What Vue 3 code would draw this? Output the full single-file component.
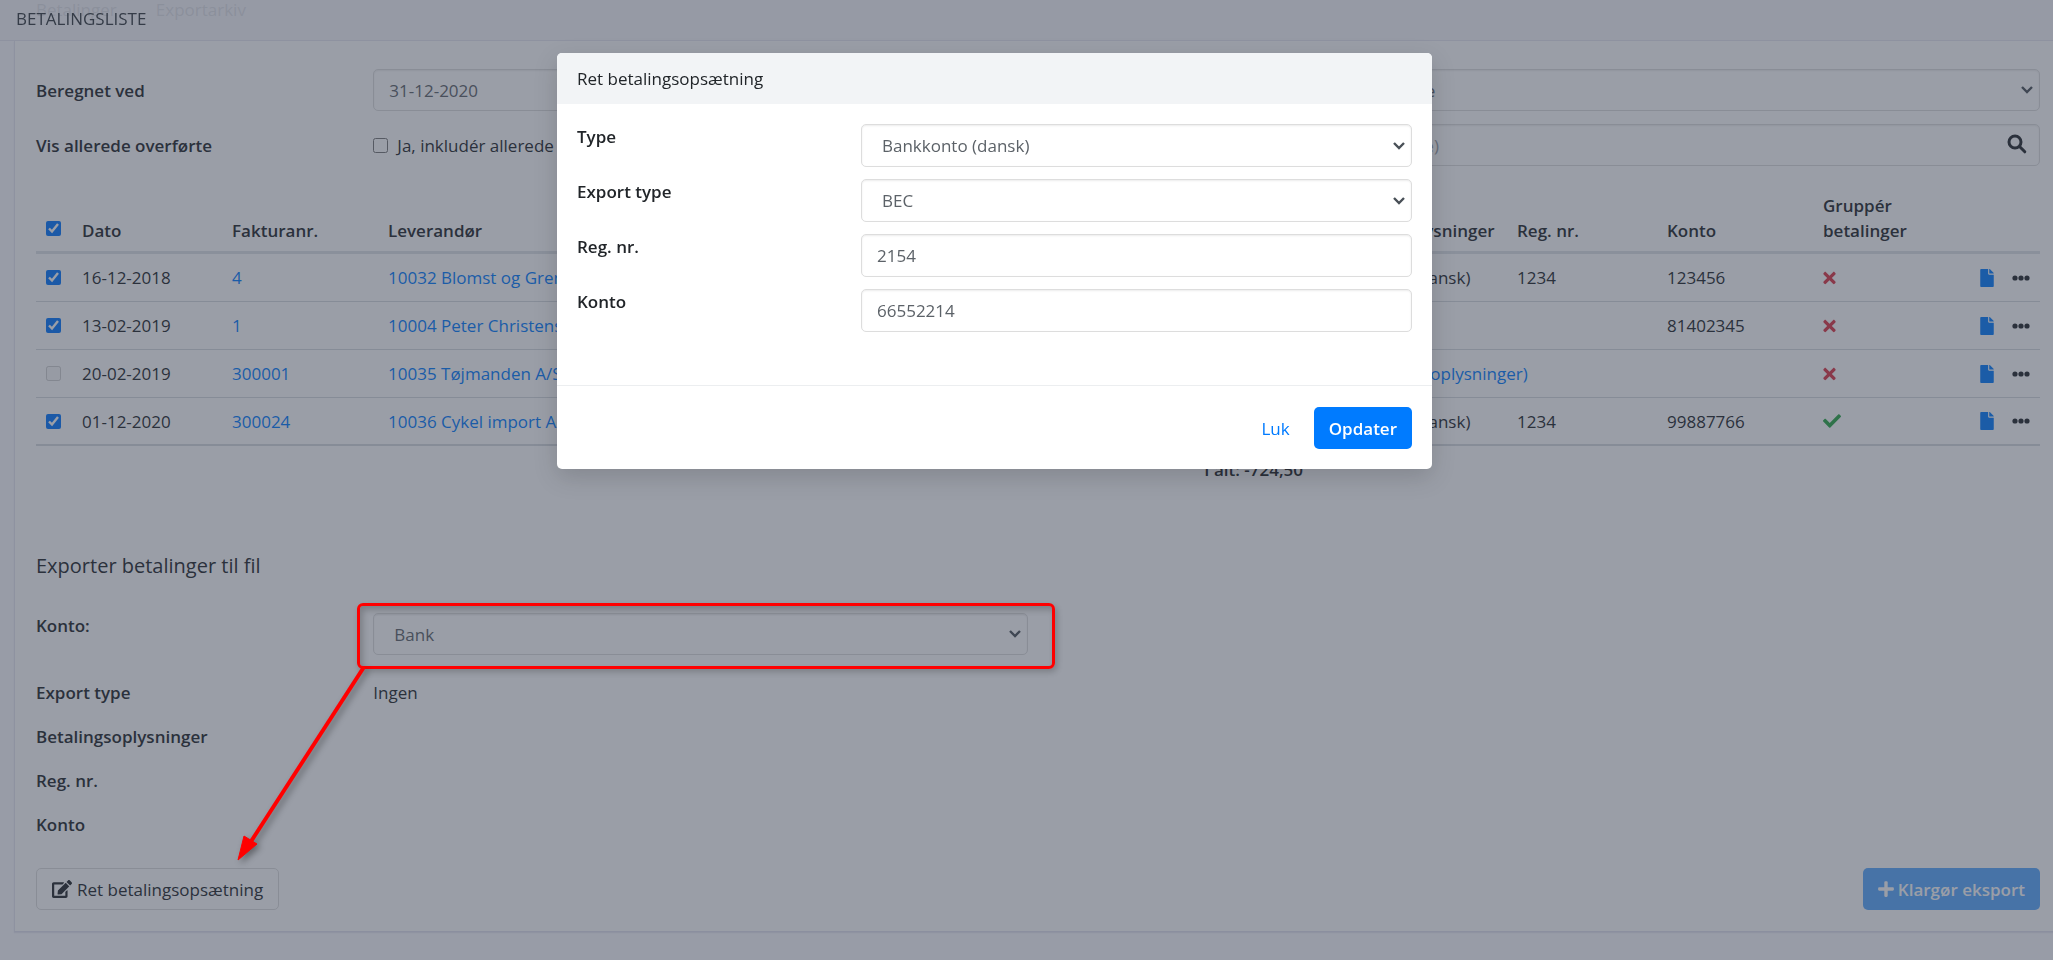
<script setup>
import { ref } from 'vue'

const rows = ref([
  { id: 1, picked: true, date: '16-12-2018', invoice: '4', supplier: '10032 Blomst og Gren', info: 'Bankkonto (dansk)', reg: '1234', account: '123456', grouped: false },
  { id: 2, picked: true, date: '13-02-2019', invoice: '1', supplier: '10004 Peter Christensen', info: '', reg: '', account: '81402345', grouped: false },
  { id: 3, picked: false, locked: true, date: '20-02-2019', invoice: '300001', supplier: '10035 Tøjmanden A/S', info: '(Ret betalingsoplysninger)', missing: true, reg: '', account: '', grouped: false },
  { id: 4, picked: true, date: '01-12-2020', invoice: '300024', supplier: '10036 Cykel import A/S', info: 'Bankkonto (dansk)', reg: '1234', account: '99887766', grouped: true },
])

const allPicked = ref(true)
const calculatedAt = ref('31-12-2020')
const regNo = ref('2154')
const accountNo = ref('66552214')
</script>

<template>
  <div class="page">
    <header class="topbar">BETALINGSLISTE</header>
    <nav class="tabs">
      <a href="#betalinger">Betalinger</a>
      <a href="#exportarkiv">Exportarkiv</a>
    </nav>

    <main class="card">
      <form class="grid filters">
        <label class="term" for="calc">Beregnet ved</label>
        <input id="calc" v-model="calculatedAt" class="control field" type="text" />
        <select class="control right" aria-label="Filter">
          <option>Alle</option>
        </select>

        <label class="term" for="include">Vis allerede overførte</label>
        <div class="check field">
          <input id="include" type="checkbox" />
          <label for="include">Ja, inkludér allerede overførte</label>
        </div>
        <div class="search right">
          <input class="control" type="text" placeholder="(alle)" aria-label="Søg" />
          <button type="button" class="bare glass" aria-label="Søg">
            <svg width="20" height="20" viewBox="0 0 20 20" fill="none" stroke="currentColor" stroke-linecap="round" stroke-width="3">
              <circle cx="8" cy="8" r="6" />
              <path d="M12.8 12.8l5 5" />
            </svg>
          </button>
        </div>
      </form>

      <table>
        <colgroup>
          <col class="c-pick" /><col class="c-date" /><col class="c-mid" /><col /><col class="c-sum" />
          <col class="c-info" /><col class="c-date" /><col class="c-mid" /><col class="c-mid" /><col class="c-tools" />
        </colgroup>
        <thead>
          <tr>
            <th><input v-model="allPicked" type="checkbox" aria-label="Vælg alle" /></th>
            <th>Dato</th>
            <th>Fakturanr.</th>
            <th>Leverandør</th>
            <th></th>
            <th>Betalingsoplysninger</th>
            <th>Reg. nr.</th>
            <th>Konto</th>
            <th>Gruppér<br />betalinger</th>
            <th></th>
          </tr>
        </thead>
        <tbody>
          <tr v-for="row in rows" :key="row.id">
            <td><input v-model="row.picked" type="checkbox" :disabled="row.locked" :aria-label="row.invoice" /></td>
            <td>{{ row.date }}</td>
            <td><a href="#faktura">{{ row.invoice }}</a></td>
            <td><a href="#leverandor">{{ row.supplier }}</a></td>
            <td></td>
            <td>
              <a v-if="row.missing" href="#oplysninger">{{ row.info }}</a>
              <template v-else>{{ row.info }}</template>
            </td>
            <td>{{ row.reg }}</td>
            <td>{{ row.account }}</td>
            <td>
              <svg v-if="row.grouped" class="icon yes" width="18" height="18" viewBox="0 0 512 512"><path d="M173.898 439.404l-166.4-166.4c-9.997-9.997-9.997-26.206 0-36.204l36.203-36.204c9.997-9.998 26.207-9.998 36.204 0L192 312.69 432.095 72.596c9.997-9.997 26.207-9.997 36.204 0l36.203 36.204c9.997 9.997 9.997 26.206 0 36.204l-294.4 294.401c-9.998 9.997-26.207 9.997-36.204-.001z" /></svg>
              <svg v-else class="icon no" width="13" height="18" viewBox="0 0 352 512"><path d="M242.72 256l100.07-100.07c12.28-12.28 12.28-32.19 0-44.48l-22.24-22.24c-12.28-12.28-32.19-12.28-44.48 0L176 189.28 75.93 89.21c-12.28-12.28-32.19-12.28-44.48 0L9.21 111.45c-12.28 12.28-12.28 32.19 0 44.48L109.28 256 9.21 356.07c-12.28 12.28-12.28 32.19 0 44.48l22.24 22.24c12.28 12.28 32.2 12.28 44.48 0L176 322.72l100.07 100.07c12.28 12.28 32.2 12.28 44.48 0l22.24-22.24c12.28-12.28 12.28-32.19 0-44.48L242.72 256z" /></svg>
            </td>
            <td>
              <div class="tools">
                <a href="#bilag" aria-label="Bilag"><svg class="icon" width="14" height="18" viewBox="0 0 384 512"><path d="M224 136V0H24C10.7 0 0 10.7 0 24v464c0 13.3 10.7 24 24 24h336c13.3 0 24-10.7 24-24V160H248c-13.2 0-24-10.8-24-24zm160-14.1v6.1H256V0h6.1c6.4 0 12.5 2.5 17 7l97.9 98c4.5 4.5 7 10.6 7 16.9z" /></svg></a>
                <button type="button" class="bare" aria-label="Mere"><svg class="icon" width="18" height="18" viewBox="0 0 18 18"><circle cx="3" cy="9" r="2.6" /><circle cx="9" cy="9" r="2.6" /><circle cx="15" cy="9" r="2.6" /></svg></button>
              </div>
            </td>
          </tr>
        </tbody>
        <tfoot>
          <tr>
            <td colspan="3"></td>
            <td colspan="2" class="total">I alt: -724,50</td>
            <td colspan="5"></td>
          </tr>
        </tfoot>
      </table>

      <h2>Exporter betalinger til fil</h2>
      <div class="grid">
        <label class="term" for="bank">Konto:</label>
        <div class="target field">
          <select id="bank" class="control">
            <option>Bank</option>
          </select>
          <div class="callout">
            <svg width="140" height="205" viewBox="0 0 140 205" aria-hidden="true">
              <path d="M134 1L20 177" stroke="#f00" stroke-width="4" />
              <path d="M8 194L14 170L27 178Z" fill="#f00" stroke="#f00" />
            </svg>
          </div>
        </div>
      </div>
      <dl class="grid facts">
        <dt class="term">Export type</dt>
        <dd class="field">Ingen</dd>
        <dt class="term">Betalingsoplysninger</dt>
        <dd class="field"></dd>
        <dt class="term">Reg. nr.</dt>
        <dd class="field"></dd>
        <dt class="term">Konto</dt>
        <dd class="field"></dd>
      </dl>

      <div class="actions">
        <button type="button" class="btn outline">
          <svg class="icon" width="20" height="18" viewBox="0 0 576 512"><path d="M402.6 83.2l90.2 90.2c3.8 3.8 3.8 10 0 13.8L274.4 405.6l-92.8 10.3c-12.4 1.4-22.9-9.1-21.5-21.5l10.3-92.8L388.8 83.2c3.8-3.8 10-3.8 13.8 0zm162-22.9l-48.8-48.8c-15.2-15.2-39.9-15.2-55.2 0l-35.4 35.4c-3.8 3.8-3.8 10 0 13.8l90.2 90.2c3.8 3.8 10 3.8 13.8 0l35.4-35.4c15.2-15.3 15.2-40 0-55.2zM384 346.2V448H64V128h229.8c3.2 0 6.2-1.3 8.5-3.5l40-40c7.6-7.6 2.2-20.5-8.5-20.5H48C21.5 64 0 85.5 0 112v352c0 26.5 21.5 48 48 48h352c26.5 0 48-21.5 48-48V306.2c0-10.7-12.9-16-20.5-8.5l-40 40c-2.2 2.3-3.5 5.3-3.5 8.5z" /></svg>
          Ret betalingsopsætning
        </button>
        <button type="button" class="btn primary" disabled>
          <svg class="icon" width="16" height="18" viewBox="0 0 448 512"><path d="M416 208H272V64c0-17.67-14.33-32-32-32h-32c-17.67 0-32 14.33-32 32v144H32c-17.67 0-32 14.33-32 32v32c0 17.67 14.33 32 32 32h144v144c0 17.67 14.33 32 32 32h32c17.67 0 32-14.33 32-32V304h144c17.67 0 32-14.33 32-32v-32c0-17.67-14.33-32-32-32z" /></svg>
          Klargør eksport
        </button>
      </div>
    </main>

    <div class="backdrop">
      <section class="modal" role="dialog" aria-labelledby="modal-title">
        <h1 id="modal-title">Ret betalingsopsætning</h1>
        <form class="fields">
          <label class="term" for="m-type">Type</label>
          <select id="m-type" class="control"><option>Bankkonto (dansk)</option></select>
          <label class="term" for="m-export">Export type</label>
          <select id="m-export" class="control"><option>BEC</option></select>
          <label class="term" for="m-reg">Reg. nr.</label>
          <input id="m-reg" v-model="regNo" class="control" type="text" />
          <label class="term" for="m-konto">Konto</label>
          <input id="m-konto" v-model="accountNo" class="control" type="text" />
        </form>
        <footer>
          <button type="button" class="btn link">Luk</button>
          <button type="button" class="btn primary">Opdater</button>
        </footer>
      </section>
    </div>
  </div>
</template>

<style>
body {
  margin: 0;
  background: #fafaff;
}
</style>

<style scoped>
.page,
.page * {
  box-sizing: border-box;
}

.page {
  min-height: 100vh;
  overflow-x: clip;
  font-family: "Open Sans", "Noto Sans", sans-serif;
  font-size: 17px;
  line-height: 25px;
  color: #212529;
}

a {
  color: #007bff;
  text-decoration: none;
}

button,
input,
select {
  margin: 0;
  font: inherit;
  color: inherit;
}

input[type="checkbox"] {
  display: block;
  width: 15px;
  height: 15px;
}

.icon {
  display: block;
  flex: none;
  fill: currentColor;
}

.bare {
  padding: 0;
  border: 0;
  background: none;
}

.topbar {
  position: fixed;
  z-index: 1;
  inset: 0 0 auto;
  height: 41px;
  padding: 6px 16px;
  border-bottom: 1px solid #e6e6f0;
  background: rgba(246, 247, 251, 0.88);
  color: #343a40;
}

.tabs {
  display: flex;
  gap: 39px;
  height: 41px;
  padding: 0 36px;
  line-height: 20px;
}

.tabs a {
  color: #495057;
}

.card {
  margin-left: 14px;
  padding: 28px 13px 21px 21px;
  border-left: 1px solid #e6e6f0;
  border-bottom: 1px solid #e0e0ee;
  background: #fff;
  box-shadow: 0 1px 1px rgba(80, 80, 140, 0.1);
}

.grid {
  display: grid;
  grid-template-columns: repeat(12, 1fr);
  gap: 13px 20px;
}

.term {
  grid-column: 1 / span 2;
  font-weight: 600;
}

.field {
  grid-column: 3 / span 4;
}

.right {
  grid-column: 9 / span 4;
}

.filters {
  align-items: center;
}

.control {
  width: 100%;
  height: 42px;
  padding: 0 15px;
  border: 1px solid #ddd;
  border-radius: 5px;
  background: #fff;
  box-shadow: inset 0 1px 2px rgba(0, 0, 0, 0.08);
  color: #5c6268;
}

select.control {
  padding: 0 24px 0 20px;
  appearance: none;
  background: #fff url("data:image/svg+xml,%3Csvg xmlns='http://www.w3.org/2000/svg' width='12' height='8' viewBox='0 0 12 8'%3E%3Cpath d='M1 1l5 5 5-5' fill='none' stroke='%23495057' stroke-width='2.4'/%3E%3C/svg%3E") no-repeat right 6px center;
}

.check {
  display: flex;
  align-items: center;
  gap: 9px;
}

.search {
  position: relative;
}

.search .control::placeholder {
  color: #9aa0a6;
}

.glass {
  position: absolute;
  top: 10px;
  right: 13px;
  display: flex;
}

table {
  width: 100%;
  margin-top: 17px;
  border-spacing: 0;
  table-layout: fixed;
}

.c-pick {
  width: 36px;
}

.c-date {
  width: 150px;
}

.c-mid {
  width: 156px;
}

.c-sum {
  width: 122px;
}

.c-info {
  width: 194px;
}

.c-tools {
  width: 71px;
}

th,
td {
  padding: 0 10px;
  text-align: left;
  white-space: nowrap;
}

th {
  padding: 10px 10px 8px;
  border-bottom: 3px solid #dee2e6;
  font-weight: 600;
  vertical-align: bottom;
}

th input[type="checkbox"] {
  margin-bottom: 7px;
}

tbody td {
  height: 48px;
  border-bottom: 1px solid #d6dade;
}

tbody tr:last-child td {
  border-bottom-width: 2px;
}

tfoot td {
  height: 46px;
}

.total {
  font-weight: 600;
  text-align: right;
}

.yes {
  color: #28a745;
}

.no {
  color: #dc3545;
}

.tools {
  display: flex;
  justify-content: flex-end;
  gap: 18px;
}

h2 {
  margin: 60px 0 33px;
  font-size: 20px;
  font-weight: 400;
  line-height: 28px;
}

.target {
  position: relative;
}

.callout {
  position: absolute;
  z-index: 3;
  inset: -10px -27px -14px -16px;
  border: 3px solid #f00;
  border-radius: 6px;
  box-shadow: 2px 3px 6px rgba(0, 0, 0, 0.2), inset 3px 4px 6px rgba(0, 0, 0, 0.2);
  pointer-events: none;
}

.callout svg {
  position: absolute;
  top: 100%;
  left: -130px;
  filter: drop-shadow(3px 3px 3px rgba(0, 0, 0, 0.35));
}

.facts {
  row-gap: 19px;
  margin: 25px 0 31px;
}

.facts dd {
  margin: 0;
}

.actions {
  display: flex;
  justify-content: space-between;
}

.btn {
  display: flex;
  align-items: center;
  gap: 4px;
  height: 42px;
  padding: 0 15px;
  border: 1px solid transparent;
  border-radius: 5px;
  background: none;
  font-weight: 600;
}

.btn.outline {
  gap: 5px;
  border-color: #ddd;
  font-weight: 500;
}

.btn.primary {
  padding: 0 14px;
  background: #007bff;
  color: #fff;
}

.btn.primary:disabled {
  opacity: 0.65;
}

.btn.link {
  color: #007bff;
  font-weight: 400;
}

.backdrop {
  position: fixed;
  z-index: 2;
  inset: 0;
  display: flex;
  align-items: flex-start;
  justify-content: center;
  padding: 53px 64px 0 0;
  background: rgba(54, 62, 80, 0.5);
}

.modal {
  width: 875px;
  border-radius: 5px;
  background: #fff;
  box-shadow: 0 8px 24px rgba(0, 0, 0, 0.15);
}

.modal h1 {
  margin: 0;
  padding: 13px 20px;
  border-radius: 5px 5px 0 0;
  background: #f2f4f6;
  font-size: 17px;
  font-weight: 400;
  line-height: 25px;
}

.fields {
  display: grid;
  grid-template-columns: 1fr 551px;
  row-gap: 12px;
  padding: 20px 20px 53px;
}

.fields .term {
  grid-column: 1;
}

.fields .control {
  height: 43px;
}

.modal footer {
  display: flex;
  justify-content: flex-end;
  gap: 8px;
  padding: 21px 20px 20px;
  border-top: 1px solid #eceef0;
}
</style>
